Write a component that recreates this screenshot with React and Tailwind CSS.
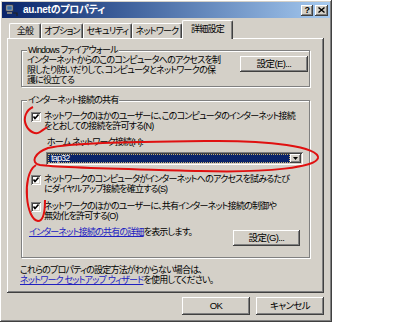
import React from 'react';

const raised =
  'bg-[#d4d0c8] shadow-[inset_-1px_-1px_#404040,inset_1px_1px_#ffffff,inset_-2px_-2px_#808080,inset_2px_2px_#d4d0c8]';
const sunken =
  'shadow-[inset_1px_1px_#808080,inset_-1px_-1px_#ffffff,inset_2px_2px_#404040,inset_-2px_-2px_#d4d0c8]';
const font = "font-['Liberation_Sans','Noto_Sans_CJK_JP',sans-serif] [font-feature-settings:'palt']";
const txt = 'text-[9px] leading-[10px] tracking-[-0.8px] whitespace-nowrap';

const Button = ({ children, className = '' }) => (
  <div className={`${raised} flex items-center justify-center text-[9.5px] tracking-[-0.6px] leading-none text-black whitespace-nowrap ${className}`}>
    {children}
  </div>
);

const Checkbox = () => (
  <span className={`${sunken} bg-white w-[10px] h-[10px] shrink-0 flex items-center justify-center`}>
    <svg width="8" height="8" viewBox="0 0 8 8">
      <polyline points="1.5,3.5 3,5.5 6.5,1.5" fill="none" stroke="#000" strokeWidth="1.6" />
    </svg>
  </span>
);

const CheckRow = ({ lines, className = '' }) => (
  <div className={`flex items-start pl-[9px] ${className}`}>
    <Checkbox />
    <div className={`ml-[3px] ${txt} -mt-[1px]`}>
      {lines[0]}
      <br />
      {lines[1]}
    </div>
  </div>
);

const GroupBox = ({ title, children, className = '' }) => (
  <fieldset
    className={`min-w-0 border border-[#808080] shadow-[1px_1px_0_#ffffff,inset_1px_1px_0_#ffffff] ${className}`}
  >
    <legend className={`ml-[5px] px-[1px] bg-[#d4d0c8] ${txt}`}>{title}</legend>
    {children}
  </fieldset>
);

const tabs = [
  { label: '全般', w: 'w-[32px]' },
  { label: 'オプション', w: 'w-[42px]' },
  { label: 'セキュリティ', w: 'w-[49px]' },
  { label: 'ネットワーク', w: 'w-[50px]' },
];

export default function App() {
  return (
    <div className={`relative w-[400px] h-[322px] bg-white ${font} text-black`}>
      <div className={`${raised} w-[332px] h-[322px] p-[2px] flex flex-col`}>
        {/* title bar */}
        <div className="h-[16px] bg-linear-to-r from-[#0a246a] to-[#a6caf0] flex items-center pl-[3px] pr-[2px]">
          <svg width="14" height="13" viewBox="0 0 14 13">
            <rect x="1" y="1" width="7" height="6" fill="#c0c0c0" stroke="#404040" strokeWidth="0.8" />
            <rect x="2.2" y="2.2" width="4.6" height="3.6" fill="#3a6ea5" />
            <rect x="2" y="8" width="5" height="2" fill="#808080" />
            <path d="M8 9 L12 9 L12 12" fill="none" stroke="#202020" strokeWidth="1.2" />
          </svg>
          <span className="ml-[4px] text-white font-bold text-[10px] tracking-[-0.3px] leading-none">au.netのプロパティ</span>
          <div className="ml-auto flex gap-[2px]">
            <Button className="w-[12px] h-[11px] text-[9px] font-bold">?</Button>
            <Button className="w-[13px] h-[11px]">
              <svg width="7" height="6" viewBox="0 0 7 6">
                <path d="M0.5 0.5 L6.5 5.5 M6.5 0.5 L0.5 5.5" stroke="#000" strokeWidth="1.4" />
              </svg>
            </Button>
          </div>
        </div>

        {/* tabs */}
        <div className="mt-[2px] h-[18px] ml-[7px] flex items-end relative z-10">
          {tabs.map((t) => (
            <div
              key={t.label}
              className={`${t.w} h-[15px] border-t border-l border-white border-r border-r-[#404040] rounded-t-[2px] flex items-center justify-center ${txt} shadow-[inset_-1px_0_#808080]`}
            >
              {t.label}
            </div>
          ))}
          <div className={`w-[51px] h-[19px] -mb-[1px] bg-[#d4d0c8] border-t border-l border-white border-r border-r-[#404040] rounded-t-[2px] flex items-center justify-center ${txt} shadow-[inset_-1px_0_#808080] pb-[2px]`}>
            詳細設定
          </div>
        </div>

        {/* tab panel */}
        <div className={`${raised} ml-[5px] w-[317px] h-[255px] pt-[7px] px-[14px]`}>
          <GroupBox title="Windows ファイアウォール" className="h-[42px]">
            <div className="flex items-start pl-[5px] pr-[1px]">
              <div className={`flex-1 ${txt} leading-[9.5px]`}>
                インターネットからのこのコンピュータへのアクセスを制
                <br />
                限したり防いだりして、コンピュータとネットワークの保
                <br />
                護に役立てる
              </div>
              <Button className="w-[68px] h-[16px] mt-[1px]">設定(E)...</Button>
            </div>
          </GroupBox>

          <GroupBox title="インターネット接続の共有" className="mt-[8px] h-[163px]">
            <CheckRow
              className="mt-[7px]"
              lines={[
                'ネットワークのほかのユーザーに、このコンピュータのインターネット接続',
                'をとおしての接続を許可する(N)',
              ]}
            />
            <div className={`ml-[25px] mt-[6px] ${txt}`}>ホーム ネットワーク接続(H):</div>
            <div className={`${sunken} bg-white ml-[24px] mt-[5px] w-[257px] h-[13px] flex items-center p-[2px]`}>
              <div className={`flex-1 h-full bg-[#0a246a] text-white ${txt} leading-none flex items-center pl-[2px] border border-dotted border-[#c8b070]`}>
                tap32
              </div>
              <Button className="w-[11px] h-[9px]">
                <svg width="5" height="3" viewBox="0 0 5 3">
                  <path d="M0 0 L5 0 L2.5 3 Z" fill="#000" />
                </svg>
              </Button>
            </div>
            <CheckRow
              className="mt-[10px]"
              lines={['ネットワークのコンピュータがインターネットへのアクセスを試みるたび', 'にダイヤルアップ接続を確立する(S)']}
            />
            <CheckRow
              className="mt-[8px]"
              lines={['ネットワークのほかのユーザーに、共有インターネット接続の制御や', '無効化を許可する(O)']}
            />
            <div className="mt-[6px] flex items-start pl-[7px] pr-[9px]">
              <div className={`flex-1 ${txt}`}>
                <span className="text-[#2020c0] underline">インターネット接続の共有の詳細</span>を表示します。
              </div>
              <Button className="w-[67px] h-[16px] mt-[3px]">設定(G)...</Button>
            </div>
          </GroupBox>

          <div className={`mt-[7px] -ml-[1px] ${txt}`}>
            これらのプロパティの設定方法がわからない場合は、
            <br />
            <span className="text-[#2020c0] underline">ネットワーク セットアップ ウィザード</span>を使用してください。
          </div>
        </div>

        {/* dialog buttons */}
        <div className="mt-[4px] flex justify-end gap-[6px] pr-[6px]">
          <Button className="w-[68px] h-[18px]">OK</Button>
          <Button className="w-[68px] h-[18px]">キャンセル</Button>
        </div>
      </div>

      {/* red annotation marks */}
      <svg className="absolute inset-0 pointer-events-none" width="400" height="322" viewBox="0 0 400 322">
        <path
          d="M33 107 C26 110 23 118 26 125 C29 132 36 135 40 132 C43 130 46 128 47 127"
          fill="none"
          stroke="#e01010"
          strokeWidth="2"
        />
        <path
          d="M205 141 C270 140 320 147 318 158 C316 167 270 173 200 171 C130 169 60 168 40 165 C30 163 34 153 48 148 C70 143 120 142 205 141"
          fill="none"
          stroke="#e01010"
          strokeWidth="2"
        />
        <path
          d="M36 165 C28 170 26 185 27 197 C28 210 32 220 38 221 C43 221 45 212 45 200"
          fill="none"
          stroke="#e01010"
          strokeWidth="2"
        />
      </svg>
    </div>
  );
}
